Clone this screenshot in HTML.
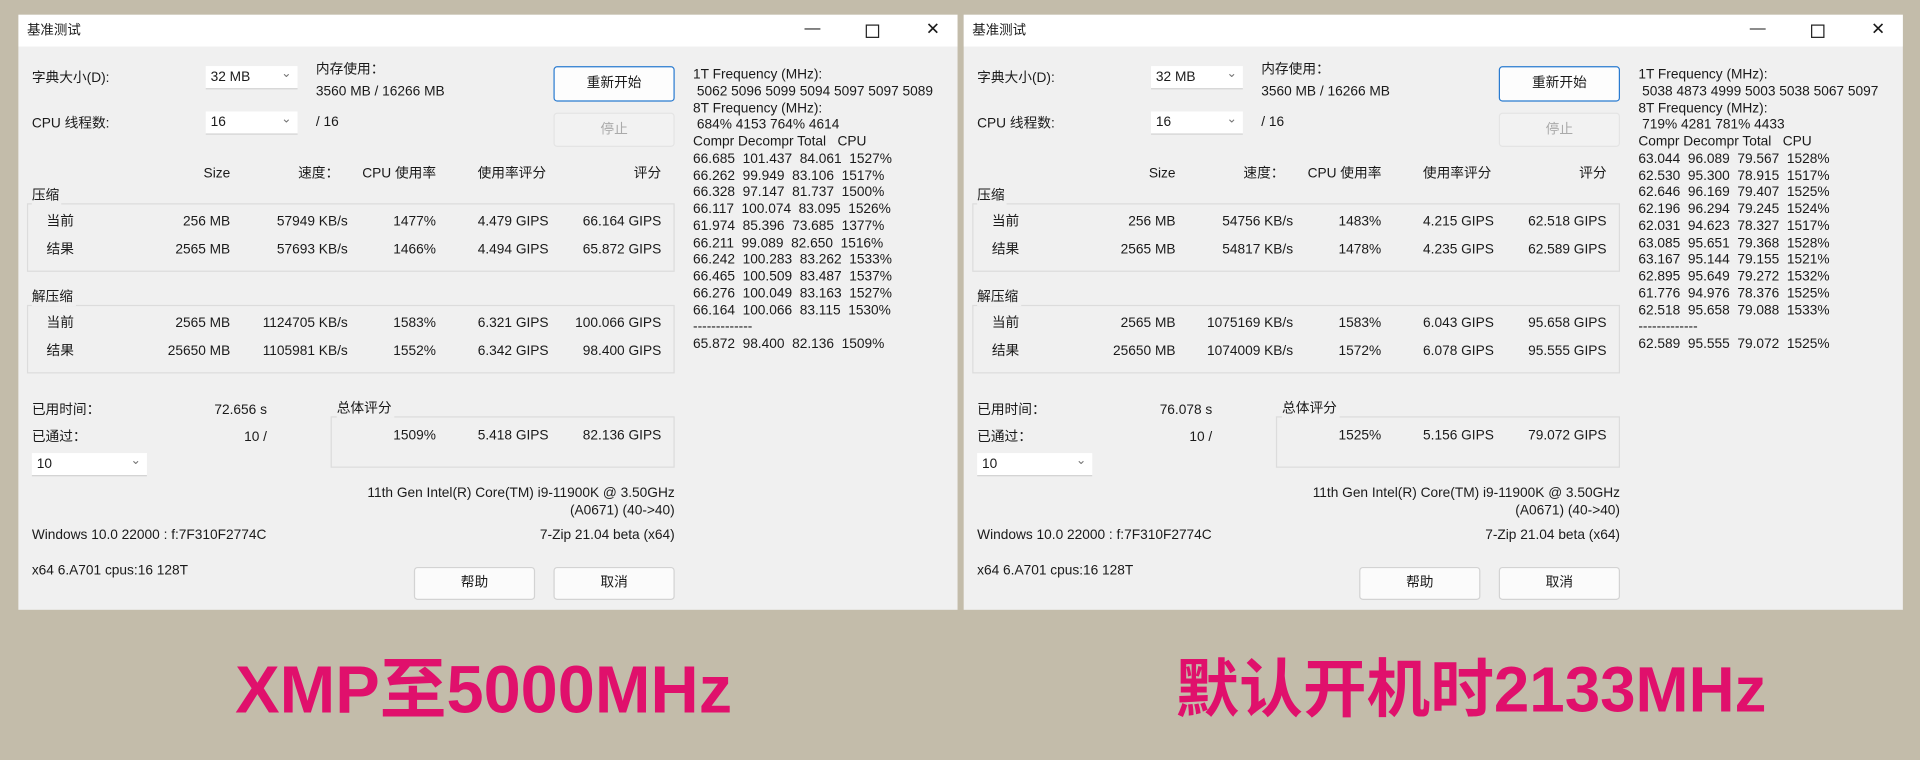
<!DOCTYPE html>
<html><head><meta charset="utf-8"><style>
html,body{margin:0;padding:0;width:1920px;height:760px;overflow:hidden;background:#c3bcaa}
#s{position:absolute;left:0;top:0;width:1568px;height:621px;transform:scale(1.22449);transform-origin:0 0;font-family:"Liberation Sans","Noto Sans CJK SC",sans-serif;font-size:11.2px;color:#1a1a1a}
.w{position:absolute;top:12px;width:767px;height:486px;background:#f0f0f0;overflow:hidden}
.tb{position:absolute;left:0;top:0;width:767px;height:26px;background:#fff}
.w div{position:absolute;white-space:nowrap;line-height:14px}
.r{text-align:right;width:120px}
.c{text-align:center;width:100px}
.dd{background:#fff;border-bottom:1px solid #d0d0d0;height:19px!important;box-sizing:border-box;padding-left:4px;line-height:19px!important}
.dd::after{content:"⌄";position:absolute;right:5px;top:-3px;color:#777;font-size:10px}
.bt{background:#fbfbfb;border:1px solid #d3d3d3;border-radius:3px;box-sizing:border-box;text-align:center}
.gb{border:1px solid #dcdcdc;box-sizing:border-box}
.gl{background:#f0f0f0;padding-right:2px}
pre{position:absolute;margin:0;font:inherit;line-height:13.75px}
.lbl{position:absolute;top:528px;font-family:"Liberation Sans","Noto Sans CJK SC",sans-serif;font-weight:bold;color:#e0106c;font-size:52px;line-height:72px;white-space:nowrap}
</style></head><body><div id="s">

<div class="w" style="left:15px">
<div class="tb"></div>
<div style="left:7px;top:6px;font-size:11px">基准测试</div>
<div style="left:642px;top:4px;font-size:13px">—</div>
<div style="left:692px;top:3px;width:9px;height:9px;border:1.3px solid #222;top:8px"></div>
<div style="left:741px;top:4px;font-size:14px">✕</div>
<div style="left:11px;top:45px">字典大小(D):</div>
<div class="dd" style="left:153px;top:42px;width:75px">32 MB</div>
<div style="left:243px;top:38px">内存使用：</div>
<div style="left:243px;top:56px">3560 MB / 16266 MB</div>
<div class="bt" style="left:437px;top:42px;width:99px;height:29px;line-height:27px;border-color:#2a7bd0;background:#fdfdfd">重新开始</div>
<div style="left:11px;top:82px">CPU 线程数:</div>
<div class="dd" style="left:153px;top:79px;width:75px">16</div>
<div style="left:243px;top:81px">/ 16</div>
<div class="bt" style="left:437px;top:80px;width:99px;height:28px;line-height:26px;color:#aaa;background:#f2f2f2;border-color:#e4e4e4">停止</div>
<pre style="left:551px;top:43px">1T Frequency (MHz):
 5062 5096 5099 5094 5097 5097 5089
8T Frequency (MHz):
 684% 4153 764% 4614
Compr Decompr Total   CPU
66.685  101.437  84.061  1527%
66.262  99.949  83.106  1517%
66.328  97.147  81.737  1500%
66.117  100.074  83.095  1526%
61.974  85.396  73.685  1377%
66.211  99.089  82.650  1516%
66.242  100.283  83.262  1533%
66.465  100.509  83.487  1537%
66.276  100.049  83.163  1527%
66.164  100.066  83.115  1530%
-------------
65.872  98.400  82.136  1509%</pre>
<div class="r" style="left:53px;top:123px">Size</div>
<div class="r" style="left:142px;top:123px">速度：</div>
<div class="c" style="left:261px;top:123px">CPU 使用率</div>
<div class="c" style="left:353px;top:123px">使用率评分</div>
<div class="r" style="left:405px;top:123px">评分</div>
<div class="gb" style="left:7px;top:154px;width:529px;height:56px"></div>
<div class="gl" style="left:11px;top:141px">压缩</div>
<div style="left:23px;top:162px">当前</div><div style="left:23px;top:185px">结果</div>
<div class="r" style="left:53px;top:162px">256 MB</div><div class="r" style="left:149px;top:162px">57949 KB/s</div><div class="r" style="left:221px;top:162px">1477%</div><div class="r" style="left:313px;top:162px">4.479 GIPS</div><div class="r" style="left:405px;top:162px">66.164 GIPS</div>
<div class="r" style="left:53px;top:185px">2565 MB</div><div class="r" style="left:149px;top:185px">57693 KB/s</div><div class="r" style="left:221px;top:185px">1466%</div><div class="r" style="left:313px;top:185px">4.494 GIPS</div><div class="r" style="left:405px;top:185px">65.872 GIPS</div>
<div class="gb" style="left:7px;top:237px;width:529px;height:56px"></div>
<div class="gl" style="left:11px;top:224px">解压缩</div>
<div style="left:23px;top:245px">当前</div><div style="left:23px;top:268px">结果</div>
<div class="r" style="left:53px;top:245px">2565 MB</div><div class="r" style="left:149px;top:245px">1124705 KB/s</div><div class="r" style="left:221px;top:245px">1583%</div><div class="r" style="left:313px;top:245px">6.321 GIPS</div><div class="r" style="left:405px;top:245px">100.066 GIPS</div>
<div class="r" style="left:53px;top:268px">25650 MB</div><div class="r" style="left:149px;top:268px">1105981 KB/s</div><div class="r" style="left:221px;top:268px">1552%</div><div class="r" style="left:313px;top:268px">6.342 GIPS</div><div class="r" style="left:405px;top:268px">98.400 GIPS</div>
<div style="left:11px;top:316px">已用时间：</div><div class="r" style="left:83px;top:316px">72.656 s</div>
<div style="left:11px;top:338px">已通过：</div><div class="r" style="left:83px;top:338px">10 /</div>
<div class="dd" style="left:11px;top:358px;width:94px">10</div>
<div class="gb" style="left:255px;top:328px;width:281px;height:42px"></div>
<div class="gl" style="left:260px;top:315px">总体评分</div>
<div class="r" style="left:221px;top:337px">1509%</div><div class="r" style="left:313px;top:337px">5.418 GIPS</div><div class="r" style="left:405px;top:337px">82.136 GIPS</div>
<div class="r" style="left:216px;top:384px;width:320px">11th Gen Intel(R) Core(TM) i9-11900K @ 3.50GHz</div>
<div class="r" style="left:216px;top:398px;width:320px">(A0671) (40-&gt;40)</div>
<div style="left:11px;top:418px">Windows 10.0 22000 :  f:7F310F2774C</div>
<div class="r" style="left:216px;top:418px;width:320px">7-Zip 21.04 beta (x64)</div>
<div style="left:11px;top:447px">x64 6.A701 cpus:16 128T</div>
<div class="bt" style="left:323px;top:451px;width:99px;height:27px;line-height:25px">帮助</div>
<div class="bt" style="left:437px;top:451px;width:99px;height:27px;line-height:25px">取消</div>
</div>

<div class="w" style="left:787px">
<div class="tb"></div>
<div style="left:7px;top:6px;font-size:11px">基准测试</div>
<div style="left:642px;top:4px;font-size:13px">—</div>
<div style="left:692px;top:3px;width:9px;height:9px;border:1.3px solid #222;top:8px"></div>
<div style="left:741px;top:4px;font-size:14px">✕</div>
<div style="left:11px;top:45px">字典大小(D):</div>
<div class="dd" style="left:153px;top:42px;width:75px">32 MB</div>
<div style="left:243px;top:38px">内存使用：</div>
<div style="left:243px;top:56px">3560 MB / 16266 MB</div>
<div class="bt" style="left:437px;top:42px;width:99px;height:29px;line-height:27px;border-color:#2a7bd0;background:#fdfdfd">重新开始</div>
<div style="left:11px;top:82px">CPU 线程数:</div>
<div class="dd" style="left:153px;top:79px;width:75px">16</div>
<div style="left:243px;top:81px">/ 16</div>
<div class="bt" style="left:437px;top:80px;width:99px;height:28px;line-height:26px;color:#aaa;background:#f2f2f2;border-color:#e4e4e4">停止</div>
<pre style="left:551px;top:43px">1T Frequency (MHz):
 5038 4873 4999 5003 5038 5067 5097
8T Frequency (MHz):
 719% 4281 781% 4433
Compr Decompr Total   CPU
63.044  96.089  79.567  1528%
62.530  95.300  78.915  1517%
62.646  96.169  79.407  1525%
62.196  96.294  79.245  1524%
62.031  94.623  78.327  1517%
63.085  95.651  79.368  1528%
63.167  95.144  79.155  1521%
62.895  95.649  79.272  1532%
61.776  94.976  78.376  1525%
62.518  95.658  79.088  1533%
-------------
62.589  95.555  79.072  1525%</pre>
<div class="r" style="left:53px;top:123px">Size</div>
<div class="r" style="left:142px;top:123px">速度：</div>
<div class="c" style="left:261px;top:123px">CPU 使用率</div>
<div class="c" style="left:353px;top:123px">使用率评分</div>
<div class="r" style="left:405px;top:123px">评分</div>
<div class="gb" style="left:7px;top:154px;width:529px;height:56px"></div>
<div class="gl" style="left:11px;top:141px">压缩</div>
<div style="left:23px;top:162px">当前</div><div style="left:23px;top:185px">结果</div>
<div class="r" style="left:53px;top:162px">256 MB</div><div class="r" style="left:149px;top:162px">54756 KB/s</div><div class="r" style="left:221px;top:162px">1483%</div><div class="r" style="left:313px;top:162px">4.215 GIPS</div><div class="r" style="left:405px;top:162px">62.518 GIPS</div>
<div class="r" style="left:53px;top:185px">2565 MB</div><div class="r" style="left:149px;top:185px">54817 KB/s</div><div class="r" style="left:221px;top:185px">1478%</div><div class="r" style="left:313px;top:185px">4.235 GIPS</div><div class="r" style="left:405px;top:185px">62.589 GIPS</div>
<div class="gb" style="left:7px;top:237px;width:529px;height:56px"></div>
<div class="gl" style="left:11px;top:224px">解压缩</div>
<div style="left:23px;top:245px">当前</div><div style="left:23px;top:268px">结果</div>
<div class="r" style="left:53px;top:245px">2565 MB</div><div class="r" style="left:149px;top:245px">1075169 KB/s</div><div class="r" style="left:221px;top:245px">1583%</div><div class="r" style="left:313px;top:245px">6.043 GIPS</div><div class="r" style="left:405px;top:245px">95.658 GIPS</div>
<div class="r" style="left:53px;top:268px">25650 MB</div><div class="r" style="left:149px;top:268px">1074009 KB/s</div><div class="r" style="left:221px;top:268px">1572%</div><div class="r" style="left:313px;top:268px">6.078 GIPS</div><div class="r" style="left:405px;top:268px">95.555 GIPS</div>
<div style="left:11px;top:316px">已用时间：</div><div class="r" style="left:83px;top:316px">76.078 s</div>
<div style="left:11px;top:338px">已通过：</div><div class="r" style="left:83px;top:338px">10 /</div>
<div class="dd" style="left:11px;top:358px;width:94px">10</div>
<div class="gb" style="left:255px;top:328px;width:281px;height:42px"></div>
<div class="gl" style="left:260px;top:315px">总体评分</div>
<div class="r" style="left:221px;top:337px">1525%</div><div class="r" style="left:313px;top:337px">5.156 GIPS</div><div class="r" style="left:405px;top:337px">79.072 GIPS</div>
<div class="r" style="left:216px;top:384px;width:320px">11th Gen Intel(R) Core(TM) i9-11900K @ 3.50GHz</div>
<div class="r" style="left:216px;top:398px;width:320px">(A0671) (40-&gt;40)</div>
<div style="left:11px;top:418px">Windows 10.0 22000 :  f:7F310F2774C</div>
<div class="r" style="left:216px;top:418px;width:320px">7-Zip 21.04 beta (x64)</div>
<div style="left:11px;top:447px">x64 6.A701 cpus:16 128T</div>
<div class="bt" style="left:323px;top:451px;width:99px;height:27px;line-height:25px">帮助</div>
<div class="bt" style="left:437px;top:451px;width:99px;height:27px;line-height:25px">取消</div>
</div>

<div class="lbl" style="left:192px;font-size:54.5px">XMP至5000MHz</div>
<div class="lbl" style="left:960px">默认开机时2133MHz</div>
</div></body></html>
